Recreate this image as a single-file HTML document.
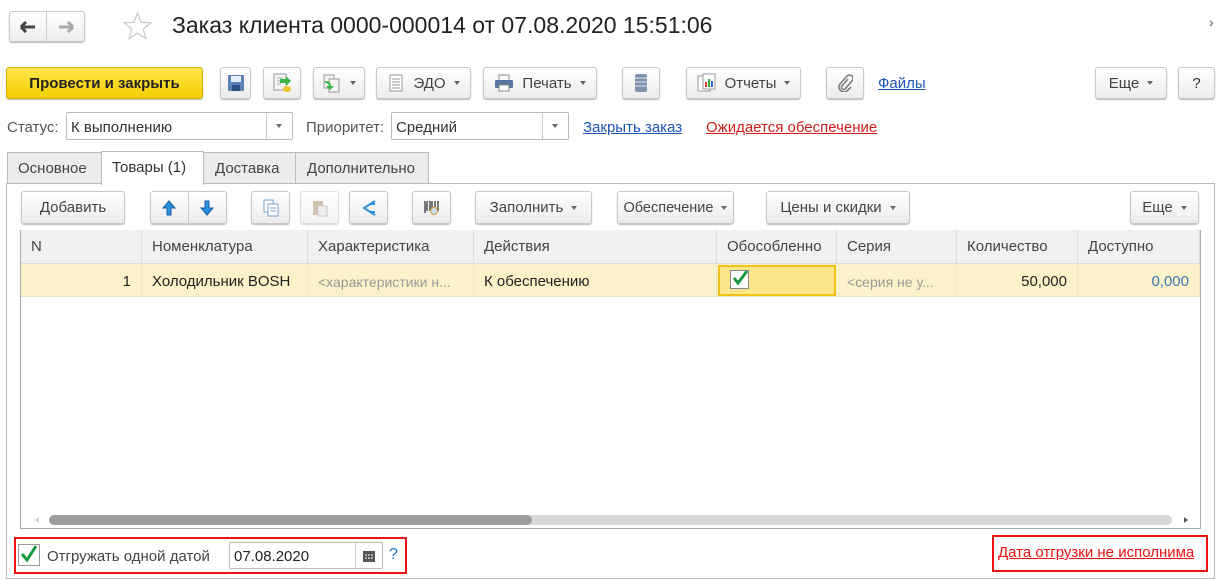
<!DOCTYPE html>
<html><head><meta charset="utf-8"><style>
*{box-sizing:border-box;margin:0;padding:0}
body{width:1219px;height:580px;background:#fff;font-family:"Liberation Sans",Arial,sans-serif;font-size:15px;color:#333;position:relative;overflow:hidden}
.a{position:absolute}
.btn{position:absolute;border:1px solid #c8c8c8;border-radius:3px;background:linear-gradient(#fff,#ececec);box-shadow:0 1px 1px #bbb;display:flex;align-items:center;justify-content:center;color:#444;font-size:15px;white-space:nowrap}
.dd{display:inline-block;width:0;height:0;border-left:3.5px solid transparent;border-right:3.5px solid transparent;border-top:4px solid #666;margin-left:8px}
.lnk{text-decoration:underline}
.th{position:absolute;top:0;height:34px;line-height:34px;padding-left:10px;border-right:1px solid #ddd;color:#444}
.td{position:absolute;top:34px;height:33px;line-height:36px;padding:0 10px;border-right:1px solid #f3e8c0;white-space:nowrap;overflow:hidden}
</style></head><body>
<div class="btn" style="left:9px;top:11px;width:76px;height:31px;padding:0">
<div style="width:38px;height:100%;border-right:1px solid #ccc;display:flex;align-items:center;justify-content:center"><svg width="16" height="12"><path d="M1 6h14M1 6l5-5M1 6l5 5" stroke="#444" stroke-width="3" fill="none"/></svg></div>
<div style="width:38px;height:100%;display:flex;align-items:center;justify-content:center"><svg width="16" height="12"><path d="M15 6H1M15 6l-5-5M15 6l-5 5" stroke="#aaa" stroke-width="3" fill="none"/></svg></div></div>
<svg class="a" style="left:122px;top:11px" width="31" height="30"><path d="M15.5 2l3.6 9.2 9.8.6-7.6 6.2 2.5 9.6-8.3-5.4-8.3 5.4 2.5-9.6L2.1 11.8l9.8-.6z" fill="none" stroke="#ccc" stroke-width="1.3"/></svg>
<div class="a" style="left:172px;top:12px;font-size:23px;color:#222">Заказ клиента 0000-000014 от 07.08.2020 15:51:06</div>
<div class="a" style="left:1209px;top:14px;font-size:14px;color:#555">›</div>
<div class="btn" style="left:6px;top:67px;width:197px;height:32px;background:linear-gradient(#ffe64d,#f3ce00);border-color:#d4b200;color:#222;font-weight:bold;font-size:15px">Провести и закрыть</div>
<div class="btn" style="left:220px;top:67px;width:31px;height:32px"><svg width="18" height="18"><rect x="1" y="1" width="16" height="16" rx="1" fill="#5a82b8"/><rect x="4" y="2" width="10" height="6" fill="#e6eef8"/><rect x="5" y="11" width="8" height="6" fill="#2d4f80"/></svg></div>
<div class="btn" style="left:263px;top:67px;width:38px;height:32px"><svg width="20" height="20"><rect x="2" y="1" width="12" height="16" fill="#f4f4f4" stroke="#999"/><path d="M5 5h6M5 8h6M5 11h4" stroke="#aaa"/><path d="M8 6h6v-3l5 5-5 5v-3H8z" fill="#3bb54a"/><ellipse cx="15" cy="16" rx="4" ry="3" fill="#e8c62c"/></svg></div>
<div class="btn" style="left:313px;top:67px;width:52px;height:32px"><svg width="20" height="20"><rect x="2" y="2" width="10" height="13" fill="#f4f4f4" stroke="#999"/><rect x="7" y="6" width="10" height="13" fill="#f4f4f4" stroke="#999"/><path d="M3 8c3 0 6 1 6 5h3l-4 4-4-4h3c0-2-2-3-4-3z" fill="#3bb54a"/></svg><span class="dd"></span></div>
<div class="btn" style="left:376px;top:67px;width:95px;height:32px"><svg width="18" height="18"><rect x="3" y="1" width="12" height="16" fill="#fff" stroke="#999"/><path d="M5 5h8M5 8h8M5 11h8M5 14h8" stroke="#999"/></svg><span style="margin-left:8px">ЭДО</span><span class="dd"></span></div>
<div class="btn" style="left:483px;top:67px;width:114px;height:32px"><svg width="20" height="18"><rect x="5" y="1" width="10" height="6" fill="#fff" stroke="#888"/><rect x="1" y="6" width="18" height="8" rx="1" fill="#5874a0"/><rect x="5" y="11" width="10" height="6" fill="#fff" stroke="#888"/></svg><span style="margin-left:8px">Печать</span><span class="dd"></span></div>
<div class="btn" style="left:622px;top:67px;width:38px;height:32px"><svg width="14" height="20"><rect x="1" y="1" width="12" height="18" rx="2" fill="#7f93ad"/><path d="M1 5h12M1 9h12M1 13h12" stroke="#dfe6ef"/></svg></div>
<div class="btn" style="left:686px;top:67px;width:115px;height:32px"><svg width="20" height="20"><rect x="1" y="3" width="12" height="15" fill="#fff" stroke="#999"/><rect x="6" y="1" width="12" height="15" fill="#fff" stroke="#999"/><rect x="8" y="9" width="2" height="5" fill="#d33"/><rect x="11" y="6" width="2" height="8" fill="#3a3"/><rect x="14" y="8" width="2" height="6" fill="#36c"/></svg><span style="margin-left:8px">Отчеты</span><span class="dd"></span></div>
<div class="btn" style="left:826px;top:67px;width:38px;height:32px"><svg width="16" height="18"><path d="M11 5l-6 7a2 2 0 0 0 3 3l7-8a3.5 3.5 0 0 0-5-5L3 10a5 5 0 0 0 7 7l4-4" fill="none" stroke="#777" stroke-width="1.5"/></svg></div>
<div class="a lnk" style="left:878px;top:75px;color:#1c55b8">Файлы</div>
<div class="btn" style="left:1095px;top:67px;width:72px;height:32px">Еще<span class="dd"></span></div>
<div class="btn" style="left:1178px;top:67px;width:37px;height:32px;color:#333">?</div>
<div class="a" style="left:7px;top:119px;color:#555">Статус:</div>
<div class="a" style="left:66px;top:112px;width:227px;height:28px;border:1px solid #bbb;border-radius:2px"><span style="position:absolute;left:4px;top:6px;color:#333">К выполнению</span><div style="position:absolute;right:0;top:0;width:26px;height:26px;border-left:1px solid #ccc"><span class="dd" style="margin:11px 0 0 9px;position:absolute"></span></div></div>
<div class="a" style="left:306px;top:119px;color:#555">Приоритет:</div>
<div class="a" style="left:391px;top:112px;width:178px;height:28px;border:1px solid #bbb;border-radius:2px"><span style="position:absolute;left:4px;top:6px;color:#333">Средний</span><div style="position:absolute;right:0;top:0;width:26px;height:26px;border-left:1px solid #ccc"><span class="dd" style="margin:11px 0 0 9px;position:absolute"></span></div></div>
<div class="a lnk" style="left:583px;top:119px;color:#1c55b8">Закрыть заказ</div>
<div class="a lnk" style="left:706px;top:119px;color:#d0201c">Ожидается обеспечение</div>
<div class="a" style="left:6px;top:183px;width:1209px;height:396px;border:1px solid #bbb"></div>
<div class="a" style="left:7px;top:152px;width:95px;height:32px;background:#ececec;border:1px solid #bbb;line-height:32px;padding-left:10px;color:#444">Основное</div>
<div class="a" style="left:101px;top:151px;width:103px;height:34px;background:#fff;border:1px solid #bbb;border-bottom:none;line-height:32px;padding-left:10px;color:#333">Товары (1)</div>
<div class="a" style="left:203px;top:152px;width:93px;height:32px;background:#ececec;border:1px solid #bbb;line-height:32px;padding-left:11px;color:#444">Доставка</div>
<div class="a" style="left:295px;top:152px;width:134px;height:32px;background:#ececec;border:1px solid #bbb;line-height:32px;padding-left:11px;color:#444">Дополнительно</div>
<div class="btn" style="left:21px;top:191px;width:104px;height:33px">Добавить</div>
<div class="btn" style="left:150px;top:191px;width:77px;height:33px;padding:0"><div style="width:38px;height:100%;border-right:1px solid #ccc;display:flex;align-items:center;justify-content:center"><svg width="14" height="16"><path d="M7 1l6 7H9v7H5V8H1z" fill="#2b8fe0" stroke="#1a5e9a"/></svg></div><div style="width:38px;display:flex;justify-content:center"><svg width="14" height="16"><path d="M7 15l6-7H9V1H5v7H1z" fill="#2b8fe0" stroke="#1a5e9a"/></svg></div></div>
<div class="btn" style="left:251px;top:191px;width:39px;height:33px"><svg width="16" height="18"><rect x="1" y="1" width="9" height="12" fill="#fff" stroke="#7aa3cc"/><rect x="5" y="5" width="10" height="12" fill="#fff" stroke="#7aa3cc"/><path d="M7 9h6M7 12h6" stroke="#7aa3cc"/></svg></div>
<div class="btn" style="left:300px;top:191px;width:39px;height:33px;opacity:.6"><svg width="16" height="18"><rect x="1" y="2" width="10" height="14" fill="#b09a80"/><rect x="6" y="7" width="9" height="10" fill="#e6e6e6" stroke="#aaa"/></svg></div>
<div class="btn" style="left:349px;top:191px;width:39px;height:33px"><svg width="18" height="18"><path d="M15 2L4 9l11 7M10 5l5 0M10 13h5" fill="none" stroke="#2b8fe0" stroke-width="2"/></svg></div>
<div class="btn" style="left:412px;top:191px;width:39px;height:33px"><svg width="18" height="18"><path d="M2 2v12M4 2v10M7 2v10M9 2v8M12 2v6M15 2v10" stroke="#444" stroke-width="1.4"/><circle cx="11" cy="12" r="3.5" fill="#cde" stroke="#d9a030"/></svg></div>
<div class="btn" style="left:475px;top:191px;width:117px;height:33px">Заполнить<span class="dd"></span></div>
<div class="btn" style="left:617px;top:191px;width:117px;height:33px;font-size:14.5px">Обеспечение<span class="dd"></span></div>
<div class="btn" style="left:766px;top:191px;width:144px;height:33px">Цены и скидки<span class="dd"></span></div>
<div class="btn" style="left:1130px;top:191px;width:69px;height:33px">Еще<span class="dd"></span></div>
<div class="a" style="left:20px;top:230px;width:1181px;height:299px;border:1px solid #aaa;border-top:none;overflow:hidden">
<div style="position:absolute;left:0;top:0;width:100%;height:34px;background:#f1f1f1;border-bottom:1px solid #ddd"></div>
<div style="position:absolute;left:0;top:34px;width:100%;height:33px;background:#fcf2c9;border-bottom:1px solid #e8e0c0"></div>
<div class="th" style="left:0;width:121px">N</div>
<div class="th" style="left:121px;width:166px">Номенклатура</div>
<div class="th" style="left:287px;width:166px">Характеристика</div>
<div class="th" style="left:453px;width:243px">Действия</div>
<div class="th" style="left:696px;width:120px">Обособленно</div>
<div class="th" style="left:816px;width:120px">Серия</div>
<div class="th" style="left:936px;width:121px">Количество</div>
<div class="th" style="left:1057px;width:122px">Доступно</div>
<div class="td" style="left:0;width:121px;text-align:right;color:#222">1</div>
<div class="td" style="left:121px;width:166px;color:#222">Холодильник BOSH</div>
<div class="td" style="left:287px;width:166px;color:#999;font-size:14px">&lt;характеристики н...</div>
<div class="td" style="left:453px;width:243px;color:#222">К обеспечению</div>
<div class="td" style="left:697px;top:35px;width:118px;height:31px;background:#fde58a;border:2px solid #f2c21b;padding:0"><div style="position:absolute;left:10px;top:3px;width:19px;height:19px;border:1px solid #888;background:#fff"><svg width="18" height="18" style="position:absolute;left:0;top:-2px"><path d="M3 9l4 5 9-12" fill="none" stroke="#1a9a3a" stroke-width="3"/></svg></div></div>
<div class="td" style="left:816px;width:120px;color:#999;font-size:14px">&lt;серия не у...</div>
<div class="td" style="left:936px;width:121px;text-align:right;color:#222">50,000</div>
<div class="td" style="left:1057px;width:122px;text-align:right;color:#3a78b8">0,000</div>
<div style="position:absolute;left:14px;top:287px;border-top:3px solid transparent;border-bottom:3px solid transparent;border-right:4px solid #ccc"></div>
<div style="position:absolute;left:28px;top:285px;width:1123px;height:10px;border-radius:5px;background:#d8d8d8"></div>
<div style="position:absolute;left:28px;top:285px;width:483px;height:10px;border-radius:5px;background:#9e9e9e"></div>
<div style="position:absolute;left:1163px;top:287px;border-top:3px solid transparent;border-bottom:3px solid transparent;border-left:4px solid #555"></div>
</div>
<div class="a" style="left:14px;top:537px;width:393px;height:37px;border:2px solid #ee1111"></div>
<div class="a" style="left:18px;top:544px;width:22px;height:22px;border:1px solid #999;background:#fff"><svg width="20" height="20" style="position:absolute;top:-1px"><path d="M3 10l5 6 9-14" fill="none" stroke="#1a9a3a" stroke-width="3"/></svg></div>
<div class="a" style="left:47px;top:548px;color:#444">Отгружать одной датой</div>
<div class="a" style="left:229px;top:542px;width:154px;height:27px;border:1px solid #bbb;border-radius:2px"><span style="position:absolute;left:4px;top:5px;color:#222">07.08.2020</span><div style="position:absolute;right:0;top:0;width:27px;height:25px;border-left:1px solid #ccc"><svg width="12" height="12" style="position:absolute;left:7px;top:7px"><rect x="0" y="1" width="12" height="11" fill="#555"/><path d="M2 5h2M5 5h2M8 5h2M2 8h2M5 8h2M8 8h2" stroke="#fff"/></svg></div></div>
<div class="a" style="left:389px;top:546px;color:#2278c8;font-size:16px">?</div>
<div class="a" style="left:992px;top:535px;width:216px;height:37px;border:2px solid #ee1111"></div>
<div class="a lnk" style="left:998px;top:544px;color:#ee1111;font-size:15px">Дата отгрузки не исполнима</div>
</body></html>
